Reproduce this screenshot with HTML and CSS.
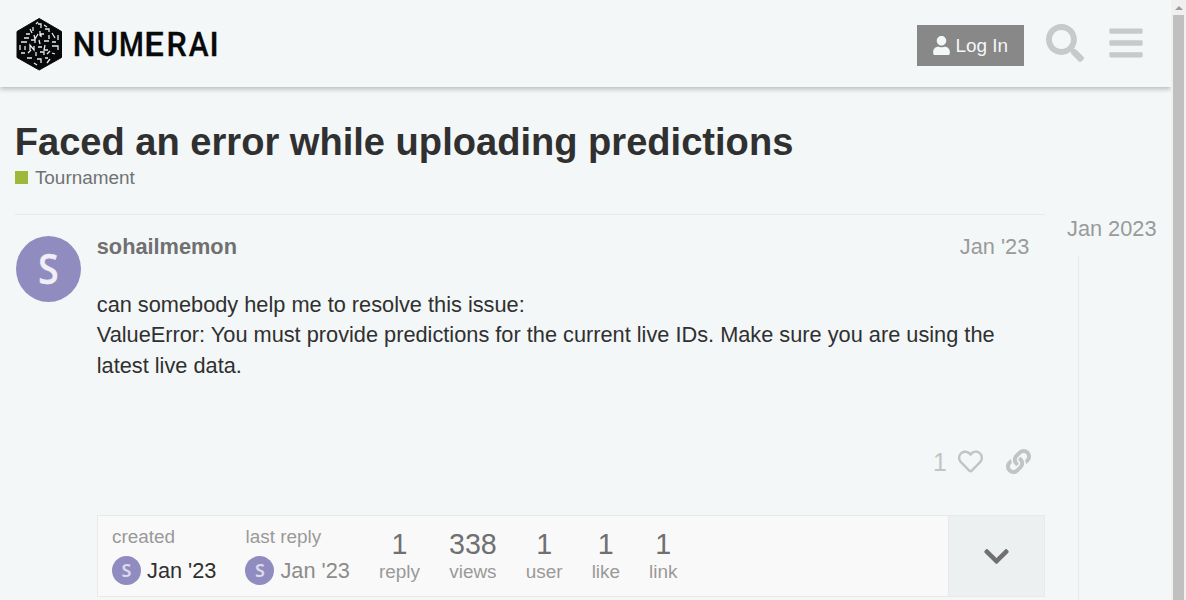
FILE: index.html
```
<!DOCTYPE html>
<html lang="en">
<head>
<meta charset="utf-8">
<title>Faced an error while uploading predictions - Numerai</title>
<link rel="stylesheet" href="styles.css">
</head>
<body>
<div class="app">
  <header class="header">
    <svg class="logo" viewBox="0 0 204 56" role="img" aria-label="Numerai">
      <path class="ink" d="M23.2 2.500 45.500 15.500V41.500L23.200 54 1 41.500V15.500Z" stroke="#08090a" stroke-linejoin="round"/>
      <path class="maze" d="M20 8l2-2M22 8h3v4M17 11v4M14 13l2 4M28 9l3 2M29 13h4v3M10 18h4M8 22h5M18 19l1 4 3-5M24 15v5M28 18h-3v3M33 19v4M36 17l3 5M42 19v5M5 26h6M15 24h4v3M23 24l1 4M28 25h5M36 26h4M4 29v5M9 30v4M14 34v-5l4 5v-4M22 31h4M29 29l-1 5h4M36 30h6v4M5 37h4M12 37l3-3M20 36v4M24 36h4v3M31 38l3-3M36 37l3 1M11 42h5M21 43h4v4M29 42h3M34 43l-3 4M18 47l3 2"/>
      <text class="wordmark" y="40"><tspan x="56.800" textLength="22.600" lengthAdjust="spacingAndGlyphs">N</tspan><tspan x="80.700" textLength="21.300" lengthAdjust="spacingAndGlyphs">U</tspan><tspan x="103" textLength="24.800" lengthAdjust="spacingAndGlyphs">M</tspan><tspan x="128.300" textLength="19.600" lengthAdjust="spacingAndGlyphs">E</tspan><tspan x="150.500" textLength="20.300" lengthAdjust="spacingAndGlyphs">R</tspan><tspan x="172.800" textLength="19.800" lengthAdjust="spacingAndGlyphs">A</tspan><tspan x="193.400" textLength="9.200" lengthAdjust="spacingAndGlyphs">I</tspan></text>
    </svg>
    <div class="actions">
      <button class="login"><svg class="user-icon" viewBox="0 0 448 512"><path d="M224 256c70.700 0 128-57.300 128-128S294.700 0 224 0 96 57.300 96 128s57.300 128 128 128zm89.600 32h-16.700c-22.200 10.200-46.900 16-72.900 16s-50.600-5.800-72.900-16h-16.700C60.200 288 0 348.200 0 422.400V464c0 26.500 21.500 48 48 48h352c26.500 0 48-21.500 48-48v-41.600c0-74.200-60.200-134.400-134.400-134.400z"/></svg>Log In</button>
      <svg class="search-icon" viewBox="0 0 512 512"><path d="M505 442.700L405.300 343c-4.500-4.500-10.600-7-17-7H372c27.600-35.300 44-79.700 44-128C416 93.100 322.900 0 208 0S0 93.100 0 208s93.100 208 208 208c48.300 0 92.700-16.400 128-44v16.300c0 6.400 2.500 12.500 7 17l99.700 99.700c9.400 9.400 24.600 9.400 33.900 0l28.300-28.300c9.400-9.400 9.400-24.600.1-34zM208 336c-70.700 0-128-57.200-128-128 0-70.700 57.200-128 128-128 70.700 0 128 57.200 128 128 0 70.700-57.200 128-128 128z"/></svg>
      <svg class="menu-icon" viewBox="0 0 448 512"><path d="M16 132h416c8.837 0 16-7.163 16-16V76c0-8.837-7.163-16-16-16H16C7.163 60 0 67.163 0 76v40c0 8.837 7.163 16 16 16zm0 160h416c8.837 0 16-7.163 16-16v-40c0-8.837-7.163-16-16-16H16c-8.837 0-16 7.163-16 16v40c0 8.837 7.163 16 16 16zm0 160h416c8.837 0 16-7.163 16-16v-40c0-8.837-7.163-16-16-16H16c-8.837 0-16 7.163-16 16v40c0 8.837 7.163 16 16 16z"/></svg>
    </div>
  </header>
  <main class="topic">
    <h1 class="title">Faced an error while uploading predictions</h1>
    <div class="category"><span class="swatch"></span>Tournament</div>
    <div class="columns">
      <article class="post">
        <div class="avatar"><span class="initial">S</span></div>
        <div class="post-main">
          <div class="meta"><b class="author">sohailmemon</b><span class="date">Jan '23</span></div>
          <p class="cooked">can somebody help me to resolve this issue:<br>ValueError: You must provide predictions for the current live IDs. Make sure you are using the latest live data.</p>
          <div class="controls">
            <span class="like-count">1</span>
            <svg class="heart-icon" viewBox="0 0 512 512"><path d="M458.400 64.300C400.600 15.700 311.300 23 256 79.300 200.700 23 111.400 15.600 53.600 64.300-21.600 127.600-10.600 230.800 43 285.500l175.400 178.700c10 10.200 23.400 15.900 37.600 15.900 14.300 0 27.600-5.600 37.600-15.800L469 285.600c53.500-54.700 64.700-157.900-10.600-221.300zm-23.600 187.500L259.400 430.500c-2.400 2.400-4.400 2.400-6.800 0L77.200 251.800c-36.500-37.200-43.900-107.600 7.300-150.700 38.900-32.700 98.900-27.800 136.500 10.500l35 35.700 35-35.700c37.800-38.500 97.800-43.200 136.500-10.600 51.100 43.100 43.500 113.900 7.300 150.800z"/></svg>
            <svg class="link-icon" viewBox="0 0 512 512"><path d="M326.612 185.391c59.747 59.809 58.927 155.698.36 214.590-.110.120-.240.250-.360.370l-67.200 67.200c-59.270 59.270-155.699 59.262-214.960 0-59.270-59.260-59.270-155.700 0-214.960l37.106-37.106c9.840-9.840 26.786-3.300 27.294 10.606.648 17.722 3.826 35.527 9.690 52.721 1.986 5.822.567 12.262-3.783 16.612l-13.087 13.087c-28.026 28.026-28.905 73.660-1.155 101.960 28.024 28.579 74.086 28.749 102.325.510l67.200-67.190c28.191-28.191 28.073-73.757 0-101.830-3.701-3.694-7.429-6.564-10.341-8.569a16.037 16.037 0 0 1-6.947-12.606c-.396-10.567 3.348-21.456 11.698-29.806l21.054-21.055c5.521-5.521 14.182-6.199 20.584-1.731a152.482 152.482 0 0 1 20.522 17.197zM467.547 44.449c-59.261-59.262-155.690-59.270-214.960 0l-67.200 67.200c-.120.120-.250.250-.360.370-58.566 58.892-59.387 154.781.360 214.590a152.454 152.454 0 0 0 20.521 17.196c6.402 4.468 15.064 3.789 20.584-1.731l21.054-21.055c8.350-8.350 12.094-19.239 11.698-29.806a16.037 16.037 0 0 0-6.947-12.606c-2.912-2.005-6.640-4.875-10.341-8.569-28.073-28.073-28.191-73.639 0-101.830l67.200-67.190c28.239-28.239 74.300-28.069 102.325.510 27.750 28.300 26.872 73.934-1.155 101.960l-13.087 13.087c-4.350 4.350-5.769 10.790-3.783 16.612 5.864 17.194 9.042 34.999 9.690 52.721.509 13.906 17.454 20.446 27.294 10.606l37.106-37.106c59.271-59.259 59.271-155.699.001-214.959z"/></svg>
          </div>
          <div class="topic-map">
            <div class="stats">
              <div class="event created"><span class="label">created</span><div class="when"><span class="mini-avatar">S</span><span>Jan '23</span></div></div>
              <div class="event last"><span class="label">last reply</span><div class="when"><span class="mini-avatar">S</span><span>Jan '23</span></div></div>
              <div class="stat"><span class="number">1</span><span class="label">reply</span></div>
              <div class="stat"><span class="number">338</span><span class="label">views</span></div>
              <div class="stat"><span class="number">1</span><span class="label">user</span></div>
              <div class="stat"><span class="number">1</span><span class="label">like</span></div>
              <div class="stat"><span class="number">1</span><span class="label">link</span></div>
            </div>
            <div class="expand"><svg class="chevron" viewBox="0 0 448 512"><path d="M207.029 381.476L12.686 187.132c-9.373-9.373-9.373-24.569 0-33.941l22.667-22.667c9.357-9.357 24.522-9.375 33.901-.040L224 284.505l154.745-154.021c9.379-9.335 24.544-9.317 33.901.040l22.667 22.667c9.373 9.373 9.373 24.569 0 33.941L240.971 381.476c-9.373 9.372-24.569 9.372-33.942 0z"/></svg></div>
          </div>
        </div>
      </article>
      <aside class="timeline"><span>Jan 2023</span><div class="track"></div></aside>
    </div>
  </main>
</div>
<div class="scrollbar"><span class="arrow"></span><div class="thumb"></div></div>
</body>
</html>
```
FILE: styles.css
```
* { box-sizing: border-box; }
body {
  margin: 0;
  height: 600px;
  display: flex;
  overflow: hidden;
  background: #f3f7f8;
  color: #303030;
  font: 21.75px/30.45px "Liberation Sans", Arial, sans-serif;
}
svg { display: block; flex: none; fill: currentColor; }
.app { width: 1171px; height: 600px; overflow: hidden; }
.header {
  height: 87px;
  padding: 0 28px 0 16px;
  display: flex;
  justify-content: space-between;
  box-shadow: 0 2px 5px rgba(0, 0, 0, .25);
}
.logo { width: 204px; height: 56px; margin-top: 16px; color: #08090a; }
.maze { fill: none; stroke: #e8ebec; stroke-width: 1.3; }
.wordmark { font: 500 33px Roboto, sans-serif; stroke: #08090a; stroke-width: .3px; }
.actions { display: flex; align-items: flex-start; color: #c8c9ca; }
.login {
  width: 107px;
  height: 41px;
  margin: 25px 22px 0 0;
  padding: 0 0 0 16px;
  border: 0;
  display: flex;
  align-items: center;
  gap: 5.500px;
  background: #888;
  color: #f3f7f8;
  font: 18.93px/41px "Liberation Sans", Arial, sans-serif;
}
.user-icon { width: 17px; height: 19px; }
.search-icon { width: 38px; height: 38px; margin: 24px 25px 0 0; }
.menu-icon { width: 34px; height: 38px; margin-top: 24px; }
.topic { padding-left: 15px; }
.title { margin: 32px 0 0 -.3px; font-size: 38.09px; line-height: 46px; white-space: nowrap; }
.category { display: flex; align-items: center; gap: 6.900px; height: 26px; color: #717273; font-size: 18.93px; }
.swatch { width: 13px; height: 13px; margin-bottom: 1px; background: #9eb83b; }
.columns { display: flex; margin-top: 23px; }
.post { width: 1030px; display: flex; border-top: 1px solid #e9eaeb; }
.avatar {
  width: 65px;
  height: 66px;
  margin: 21px 15.750px 0 1px;
  flex: none;
  border-radius: 50%;
  background: #908cbf;
  color: #f0eff6;
  text-align: center;
  font: 500 41px/64px "Noto Sans", sans-serif;
}
.initial { display: block; transform: scaleX(.9); -webkit-text-stroke: .6px #f0eff6; }
.post-main { width: 948px; }
.meta { display: flex; justify-content: space-between; padding: 17px 15.500px 0 0; }
.author { color: #707070; }
.date { color: #999b9b; }
.cooked { width: 932px; margin: 27.400px 0 0; }
.controls {
  height: 44px;
  margin-top: 58.600px;
  padding-right: 14px;
  display: flex;
  align-items: center;
  justify-content: flex-end;
  color: #c2c4c4;
}
.like-count { margin-right: 11.500px; font-size: 24.9px; }
.heart-icon { width: 25px; height: 25px; margin-right: 22.500px; }
.link-icon { width: 25px; height: 25px; }
.topic-map { height: 82px; margin-top: 31px; display: flex; border: 1px solid #e7eaeb; background: #f9f9f9; }
.stats { flex: 1; display: flex; padding: 8px 0 0 14.250px; }
.label { display: block; color: #999; font-size: 18.93px; line-height: 25px; }
.event { margin-right: 29px; }
.when { display: flex; align-items: center; gap: 6px; height: 31px; margin-top: 7px; }
.last .when { color: #8c8c8c; }
.mini-avatar {
  width: 29px;
  height: 29px;
  margin-bottom: 2px;
  border-radius: 50%;
  background: #908cbf;
  color: #dcdaeb;
  text-align: center;
  font: 600 18px/29px "Noto Sans", sans-serif;
}
.stat { margin-right: 29px; text-align: center; }
.number { display: block; height: 35px; color: #707070; font-size: 28.7px; line-height: 40px; }
.expand { width: 96px; display: flex; align-items: center; justify-content: center; border-left: 1px solid #e7eaeb; background: #ecf0f1; color: #707070; }
.chevron { width: 25px; height: 29px; margin-top: 1px; }
.timeline { margin-left: 22px; color: #999b9b; white-space: nowrap; }
.track { height: 400px; margin: 11px 0 0 11px; border-left: 1px solid #e9eaeb; }
.scrollbar { width: 15px; height: 600px; padding: 6px 2px 0; background: #f0f0f0; }
.arrow { display: block; width: 8px; height: 4px; margin: 0 0 5px 2px; background: #9c9c9c; clip-path: polygon(50% 0, 100% 100%, 0 100%); }
.thumb { height: 585px; background: #c0c0c0; }
```
